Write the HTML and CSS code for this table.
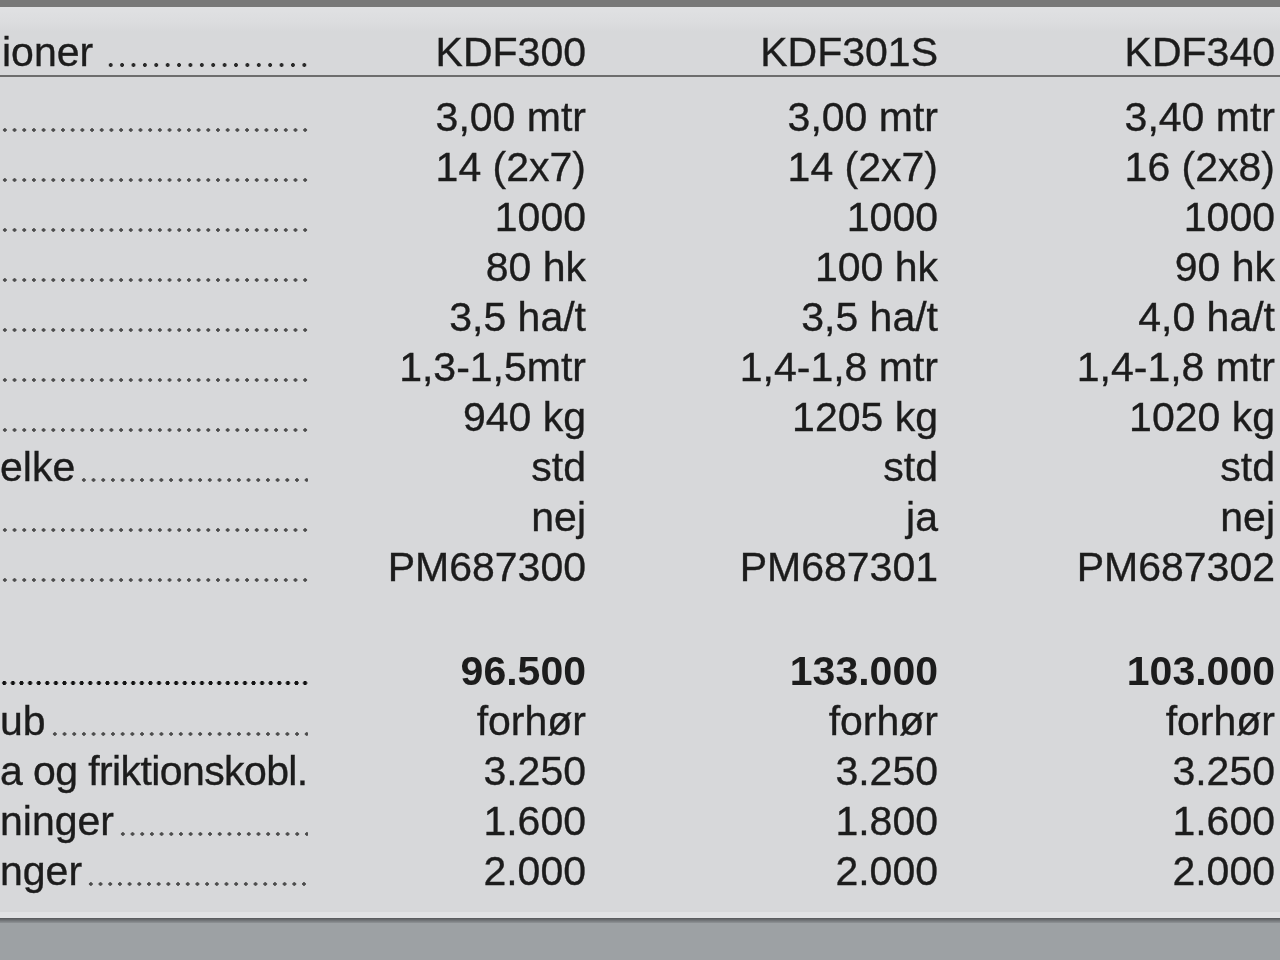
FILE: index.html
```html
<!DOCTYPE html>
<html lang="da">
<head>
<meta charset="utf-8">
<title>KDF specifikationer</title>
<link rel="stylesheet" href="styles.css">
</head>
<body>
<div class="topband"></div>
<main class="panel">
  <div class="sheet">
    <div class="row head">
      <div class="lbl"><span class="txt cut-ioner">ioner</span><span class="leader"></span></div>
      <div class="val">KDF300</div><div class="val">KDF301S</div><div class="val">KDF340</div>
    </div>
    <div class="body">
      <div class="row"><div class="lbl"><span class="leader"></span></div><div class="val">3,00 mtr</div><div class="val">3,00 mtr</div><div class="val">3,40 mtr</div></div>
      <div class="row"><div class="lbl"><span class="leader"></span></div><div class="val">14 (2x7)</div><div class="val">14 (2x7)</div><div class="val">16 (2x8)</div></div>
      <div class="row"><div class="lbl"><span class="leader"></span></div><div class="val">1000</div><div class="val">1000</div><div class="val">1000</div></div>
      <div class="row"><div class="lbl"><span class="leader"></span></div><div class="val">80 hk</div><div class="val">100 hk</div><div class="val">90 hk</div></div>
      <div class="row"><div class="lbl"><span class="leader"></span></div><div class="val">3,5 ha/t</div><div class="val">3,5 ha/t</div><div class="val">4,0 ha/t</div></div>
      <div class="row"><div class="lbl"><span class="leader"></span></div><div class="val">1,3-1,5mtr</div><div class="val">1,4-1,8 mtr</div><div class="val">1,4-1,8 mtr</div></div>
      <div class="row"><div class="lbl"><span class="leader"></span></div><div class="val">940 kg</div><div class="val">1205 kg</div><div class="val">1020 kg</div></div>
      <div class="row"><div class="lbl"><span class="txt">elke</span><span class="leader"></span></div><div class="val">std</div><div class="val">std</div><div class="val">std</div></div>
      <div class="row"><div class="lbl"><span class="leader"></span></div><div class="val">nej</div><div class="val">ja</div><div class="val">nej</div></div>
      <div class="row"><div class="lbl"><span class="leader"></span></div><div class="val">PM687300</div><div class="val">PM687301</div><div class="val">PM687302</div></div>

      <div class="row price"><div class="lbl"><span class="leader"></span></div><div class="val">96.500</div><div class="val">133.000</div><div class="val">103.000</div></div>
      <div class="row"><div class="lbl"><span class="txt">ub</span><span class="leader"></span></div><div class="val">forhør</div><div class="val">forhør</div><div class="val">forhør</div></div>
      <div class="row"><div class="lbl"><span class="txt tight">a og friktionskobl.</span></div><div class="val">3.250</div><div class="val">3.250</div><div class="val">3.250</div></div>
      <div class="row"><div class="lbl"><span class="txt">ninger</span><span class="leader"></span></div><div class="val">1.600</div><div class="val">1.800</div><div class="val">1.600</div></div>
      <div class="row"><div class="lbl"><span class="txt">nger</span><span class="leader"></span></div><div class="val">2.000</div><div class="val">2.000</div><div class="val">2.000</div></div>
    </div>
  </div>
</main>
<div class="bottomband"></div>
</body>
</html>
```
FILE: styles.css
```css
html, body {
  margin: 0;
  padding: 0;
}
body {
  width: 1280px;
  height: 960px;
  overflow: hidden;
  background: #9da1a4;
  font-family: "Liberation Sans", Arial, Helvetica, sans-serif;
  color: #1c1c1c;
}
.topband {
  height: 7px;
  background: #787878;
}
.panel {
  background: linear-gradient(#e0e1e3 0, #dcdddf 14px, #d7d8da 24px, #d7d8da 100%);
  height: 911px;
  padding-top: 22px;
  box-sizing: border-box;
  border-bottom: 6px solid #e1e2e4;
}
.bottomband {
  height: 5px;
  background: linear-gradient(#55575a, #8f9396);
}
.sheet {
  filter: blur(0.45px);
  overflow: hidden;
}
.row {
  display: grid;
  grid-template-columns: 310px 276px 352px 337px;
  height: 50px;
  line-height: 50px;
  font-size: 41px;
  white-space: nowrap;
  -webkit-text-stroke: 0.35px #1c1c1c;
}
.row.head {
  height: 46px;
  line-height: 46px;
  border-bottom: 2px solid #6d6d6d;
}
.body {
  padding-top: 15px;
}
.row.price {
  margin-top: 54px;
  font-weight: bold;
  -webkit-text-stroke: 0;
}
.lbl {
  display: flex;
  overflow: hidden;
  padding-right: 2px;
}
.val {
  text-align: right;
}
.txt {
  flex: none;
}
.tight {
  letter-spacing: -0.6px;
}
.leader {
  flex: 1;
  margin-left: 4px;
  background-image: radial-gradient(circle, #4c4c4c 1.5px, rgba(76,76,76,0) 2px);
  background-size: 9.7px 4px;
  background-repeat: repeat-x;
  background-position: 0 36px;
}
.lbl > .leader:first-child {
  margin-left: 0;
}
.head .leader {
  margin-left: 12px;
  background-image: radial-gradient(circle, #2a2a2a 1.7px, rgba(42,42,42,0) 2.2px);
  background-size: 11.4px 4px;
  background-position: 0 34px;
}
.price .leader {
  background-image: radial-gradient(circle, #111 1.8px, rgba(17,17,17,0) 2.3px);
  background-size: 8.6px 4px;
  background-position: 0 35px;
}
.cut-ioner { margin-left: 2px; }
```
